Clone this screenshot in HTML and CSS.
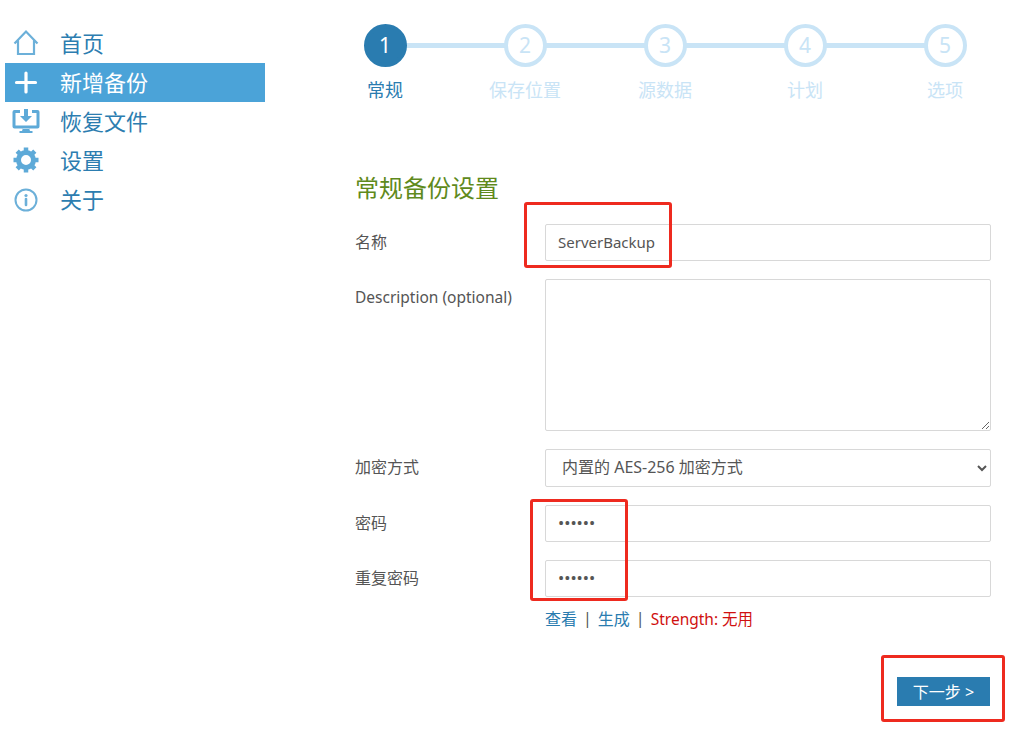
FILE: index.html
```html
<!DOCTYPE html>
<html lang="zh">
<head>
<meta charset="utf-8">
<title>新增备份</title>
<link rel="stylesheet" href="styles.css">
</head>
<body>
<div class="page">
  <nav class="sidebar">
    <a class="nav-item"><svg class="nav-icon" viewBox="0 0 28 28"><path d="M2.500 14.500 14 2.500l11.500 12M6 11.500V25h16V11.500" fill="none" stroke="#6cb0d9" stroke-width="2.200"/></svg><span class="nav-text">首页</span></a>
    <a class="nav-item active"><svg class="nav-icon" viewBox="0 0 28 28"><path d="M14 5v19M4.500 14.500h19" fill="none" stroke="#fff" stroke-width="3.200" stroke-linecap="round"/></svg><span class="nav-text">新增备份</span></a>
    <a class="nav-item"><svg class="nav-icon" viewBox="0 0 28 26"><path d="M8 2H2.500A2 2 0 0 0 .5 4v14.500a2 2 0 0 0 2 2h23a2 2 0 0 0 2-2V4a2 2 0 0 0-2-2H20v3h4.500v12.500h-21V5H8zM11 20h6l1 3h2.500v2h-13v-2H10z" fill="#5eaad8"/><path d="M12 1h4v7h4l-6 6-6-6h4z" fill="#5eaad8"/></svg><span class="nav-text">恢复文件</span></a>
    <a class="nav-item"><svg class="nav-icon" viewBox="0 0 28 28"><circle cx="14" cy="14" r="7.500" fill="none" stroke="#5eaad8" stroke-width="5"/><path d="M14 1.500v5M14 21.500v5M1.500 14h5M21.500 14h5M5.200 5.200l3.500 3.500M19.300 19.300l3.500 3.500M22.800 5.200l-3.500 3.500M8.700 19.300l-3.500 3.500" stroke="#5eaad8" stroke-width="4.500"/></svg><span class="nav-text">设置</span></a>
    <a class="nav-item"><svg class="nav-icon" viewBox="0 0 28 28"><circle cx="14" cy="15" r="10.500" fill="none" stroke="#6cb0d9" stroke-width="2"/><path d="M14 14v6" stroke="#6cb0d9" stroke-width="2.600" stroke-linecap="round"/><circle cx="14" cy="10.500" r="1.600" fill="#6cb0d9"/></svg><span class="nav-text">关于</span></a>
  </nav>
  <main class="main">
    <ol class="steps">
      <li class="step current"><span class="bubble">1</span><span class="step-label">常规</span></li>
      <li class="step"><span class="bubble">2</span><span class="step-label">保存位置</span></li>
      <li class="step"><span class="bubble">3</span><span class="step-label">源数据</span></li>
      <li class="step"><span class="bubble">4</span><span class="step-label">计划</span></li>
      <li class="step"><span class="bubble">5</span><span class="step-label">选项</span></li>
    </ol>
    <form class="form">
      <h2 class="title">常规备份设置</h2>
      <div class="row"><label class="label">名称</label><input class="field" type="text" value="ServerBackup"></div>
      <div class="row"><label class="label latin">Description (optional)</label><textarea class="field area"></textarea></div>
      <div class="row"><label class="label">加密方式</label><select class="field select"><option>内置的 AES-256 加密方式</option></select></div>
      <div class="row"><label class="label">密码</label><input class="field secret" type="password" value="123456"></div>
      <div class="row compact"><label class="label">重复密码</label><input class="field secret" type="password" value="123456"></div>
      <div class="links"><a class="link">查看</a><span class="sep">|</span><a class="link">生成</a><span class="sep">|</span><span class="strength">Strength: 无用</span></div>
      <div class="actions"><button class="next" type="button">下一步 &gt;</button></div>
    </form>
  </main>
</div>
<div class="mark mark-name"></div>
<div class="mark mark-pass"></div>
<div class="mark mark-next"></div>
</body>
</html>
```
FILE: styles.css
```css
* { box-sizing: border-box; }
html, body { margin: 0; background: #fff; }
body {
  position: relative;
  width: 1020px;
  height: 730px;
  overflow: hidden;
  font-family: "Noto Sans", "Noto Sans CJK SC", sans-serif;
  color: #555;
}
.page { display: flex; }
.sidebar { width: 355px; flex: none; padding: 24px 90px 0 5px; }
.nav-item {
  display: flex;
  align-items: center;
  height: 39px;
  padding: 0 0 2px 7px;
  font-size: 22px;
  color: #2c7db0;
}
.nav-item.active { background: #4ba3d8; color: #fff; }
.nav-icon { width: 28px; height: 28px; flex: none; margin-right: 20px; }
.nav-text { padding-bottom: 2px; }
.main { width: 636px; flex: none; }
.steps {
  list-style: none;
  margin: 24px 0 0 -40px;
  padding: 0;
  display: grid;
  grid-template-columns: repeat(5, 140px);
}
.step {
  position: relative;
  display: flex;
  flex-direction: column;
  align-items: center;
}
.step:not(:last-child)::after {
  content: "";
  position: absolute;
  left: 70px;
  top: 19px;
  width: 140px;
  height: 5px;
  background: #c9e4f6;
}
.bubble {
  position: relative;
  z-index: 1;
  width: 43px;
  height: 43px;
  border: 4px solid #c9e4f6;
  border-radius: 50%;
  background: #fff;
  color: #c9e4f6;
  font-size: 21px;
  line-height: 35px;
  text-align: center;
}
.step-label { margin-top: 9px; font-size: 18px; line-height: 28px; color: #c9e4f6; }
.current .bubble { background: #2a7cb0; border-color: #2a7cb0; color: #fff; }
.current .step-label { color: #2a7cb0; }
.form { margin-top: 66px; }
.title { margin: 0 0 18px; font-size: 24px; font-weight: 400; line-height: 36px; color: #5f8a1c; height: 36px; }
.row { display: flex; align-items: flex-start; margin-bottom: 18px; }
.row.compact { margin-bottom: 8px; }
.label { width: 190px; flex: none; font-size: 16px; line-height: 37px; color: #555; }
.label.latin { font-size: 15.500px; }
.field {
  display: block;
  width: 446px;
  height: 37px;
  margin: 0;
  padding: 0 12px 2px;
  border: 1px solid #d8d8d8;
  border-radius: 2px;
  background: #fff;
  font: 15px "Noto Sans", "Noto Sans CJK SC", sans-serif;
  color: #555;
  outline: none;
}
.area { height: 152px; resize: vertical; }
.select { height: 38px; font-size: 16px; }
.secret { font-size: 16.500px; }
.links { display: flex; align-items: center; margin-left: 190px; height: 26px; font-size: 16px; }
.link { color: #2a7cb0; }
.sep { margin: 0 6px; color: #555; }
.strength { color: #d01010; font-size: 15.500px; }
.actions { display: flex; justify-content: flex-end; margin-top: 46px; padding-right: 1px; }
.next {
  width: 93px;
  height: 29px;
  padding: 0 0 2px;
  border: 0;
  background: #2a7cb0;
  color: #fff;
  font: 16px "Noto Sans", "Noto Sans CJK SC", sans-serif;
}
.mark {
  position: absolute;
  border: 3px solid #ee2a1f;
  border-radius: 3px;
  pointer-events: none;
}
.mark-name { left: 524px; top: 202px; width: 148px; height: 66px; }
.mark-pass { left: 530px; top: 499px; width: 98px; height: 102px; }
.mark-next { left: 881px; top: 655px; width: 124px; height: 67px; }
```
